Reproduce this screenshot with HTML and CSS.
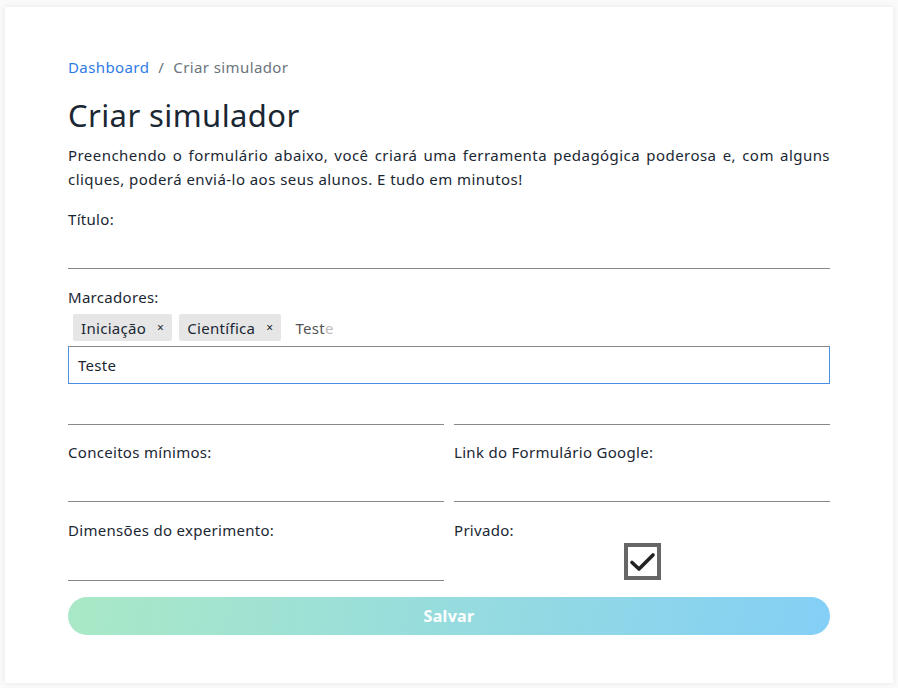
FILE: index.html
```html
<!DOCTYPE html>
<html lang="pt">
<head>
<meta charset="utf-8">
<link rel="stylesheet" href="styles.css">
</head>
<body>
<main class="card">
  <nav class="crumbs"><a class="crumb-link" href="#">Dashboard</a><span class="crumb-sep">/</span><span class="crumb-cur">Criar simulador</span></nav>
  <h1 class="title">Criar simulador</h1>
  <p class="lead">Preenchendo o formulário abaixo, você criará uma ferramenta pedagógica poderosa e, com alguns cliques, poderá enviá-lo aos seus alunos. E tudo em minutos!</p>
  <div class="field">
    <label class="label">Título:</label>
    <div class="line"></div>
  </div>
  <div class="field">
    <label class="label">Marcadores:</label>
    <div class="tags">
      <span class="tag">Iniciação<span class="x">×</span></span>
      <span class="tag">Científica<span class="x">×</span></span>
      <span class="typed">Test<span class="ghost">e</span></span>
    </div>
    <div class="box">Teste</div>
  </div>
  <div class="grid">
    <div class="cell"><div class="line"></div></div>
    <div class="cell"><div class="line"></div></div>
    <div class="cell"><label class="label">Conceitos mínimos:</label><div class="line"></div></div>
    <div class="cell"><label class="label">Link do Formulário Google:</label><div class="line"></div></div>
    <div class="cell last"><label class="label">Dimensões do experimento:</label><div class="line"></div></div>
    <div class="cell last"><label class="label">Privado:</label>
      <div class="check-wrap"><span class="check"><svg width="29" height="29" viewBox="0 0 29 29"><path d="M4 15.5 L11 22 L25 8" fill="none" stroke="#222" stroke-width="3.6" stroke-linecap="round" stroke-linejoin="round"/></svg></span></div>
    </div>
  </div>
  <button class="save">Salvar</button>
</main>
</body>
</html>
```
FILE: styles.css
```css
html, body { margin: 0; padding: 0; background: #fafafa; }
body {
  font-family: "Noto Sans", "Open Sans", sans-serif;
  color: #1a2733;
  padding: 7px 5px 5px 5px;
}
.card {
  background: #fff;
  box-shadow: 0 0 6px rgba(0,0,0,0.08);
  padding: 48px 63px 48px 63px;
  height: 580px;
}
.crumbs { font-size: 15px; line-height: 24px; letter-spacing: 0.4px; }
.crumb-link { color: #2f7be6; text-decoration: none; }
.crumb-sep { color: #6c757d; margin: 0 9px; }
.crumb-cur { color: #6c757d; }
.title {
  font-weight: 400;
  font-size: 31px;
  line-height: 38px;
  margin: 17px 0 9px 0;
  color: #1a2733;
  letter-spacing: 0.4px;
}
.lead {
  margin: 0;
  font-size: 15px;
  line-height: 24px;
  text-align: justify;
  letter-spacing: 0.45px;
}
.field { margin-top: 18px; }
.label { display: block; font-size: 15px; line-height: 20px; letter-spacing: 0.3px; }
.line { border-bottom: 1px solid #888; height: 39px; }
.tags { display: flex; align-items: center; gap: 7px; margin: 7px 0 5px 5px; }
.tag {
  background: #e6e6e6;
  border-radius: 2px;
  height: 27px;
  display: flex;
  align-items: center;
  padding: 0 8px 0 8px;
  font-size: 15px;
  letter-spacing: 0.3px;
}
.x { font-size: 12px; margin-left: 11px; }
.typed { font-size: 15px; color: #555; margin-left: 7px; letter-spacing: 0.3px; }
.ghost { color: #bbb; }
.box {
  border: 1px solid #4a90e2;
  border-top-color: #888;
  height: 36px;
  line-height: 36px;
  padding-left: 9px;
  font-size: 15px;
  letter-spacing: 0.3px;
}
.grid {
  display: grid;
  grid-template-columns: 1fr 1fr;
  column-gap: 10px;
  row-gap: 17px;
}
.cell:nth-child(-n+2) .line { height: 40px; }
.cell.last { margin-top: 1px; }
.cell.last .line { height: 40px; }
.check-wrap { display: flex; justify-content: center; margin-top: 3px; }
.check {
  width: 29px; height: 29px;
  border: 4px solid #666;
  display: block;
}
.check svg { display: block; }
.save {
  display: block;
  width: 100%;
  margin-top: 16px;
  height: 38px;
  border: none;
  border-radius: 19px;
  background: linear-gradient(100deg, #a9e9c6 0%, #84cff6 100%);
  color: #fff;
  font-family: "Noto Sans", sans-serif;
  font-weight: 700;
  font-size: 16px;
  letter-spacing: 0.3px;
}
```
